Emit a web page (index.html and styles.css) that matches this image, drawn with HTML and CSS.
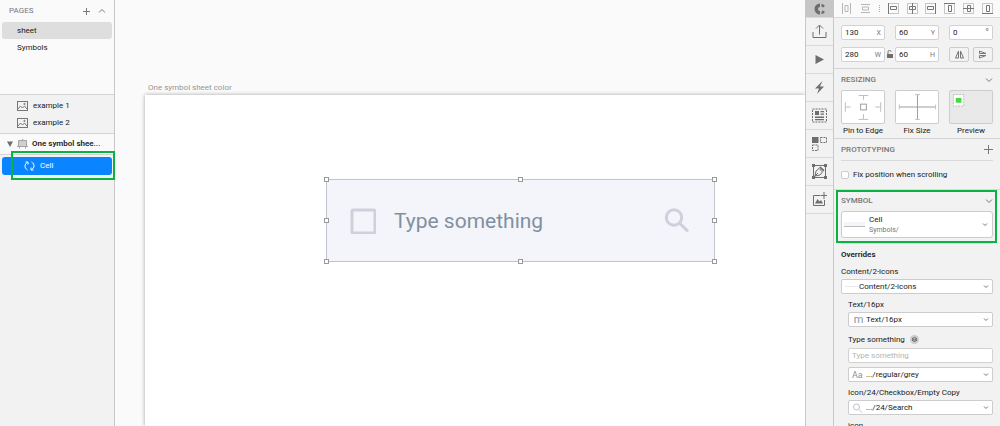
FILE: index.html
```html
<!DOCTYPE html>
<html lang="en">
<head>
    <meta charset="UTF-8">
    <meta name="viewport" content="width=device-width, initial-scale=1.0">
    <title>One symbol sheet color</title>
    <link rel="stylesheet" href="styles.css">
</head>
<body>
    <aside class="sidebar">
        <section class="pages">
            <header class="pages-header">
                <h2>PAGES</h2>
                <button class="icon-btn" aria-label="Add page"><svg width="9" height="9" viewBox="0 0 9 9"><path d="M4.500 1v7M1 4.500h7"/></svg></button>
                <button class="icon-btn" aria-label="Collapse pages"><svg width="8" height="8" viewBox="0 0 8 8"><path d="M1 5.500l3-3 3 3"/></svg></button>
            </header>
            <button class="page active-page">sheet</button>
            <button class="page">Symbols</button>
        </section>
        <section class="artboards">
            <button class="layer">
                <svg width="11" height="10" viewBox="0 0 11 10"><rect x=".5" y=".5" width="10" height="9"/><path d="M1 8l2.500-3 2 2 2-2L10 8"/><circle cx="7.500" cy="3" r=".7"/></svg>
                example 1
            </button>
            <button class="layer">
                <svg width="11" height="10" viewBox="0 0 11 10"><rect x=".5" y=".5" width="10" height="9"/><path d="M1 8l2.500-3 2 2 2-2L10 8"/><circle cx="7.500" cy="3" r=".7"/></svg>
                example 2
            </button>
        </section>
        <button class="open-artboard">
            <svg width="6" height="6" viewBox="0 0 6 6"><path class="solid" d="M0 .5h6L3 6z"/></svg>
            <svg class="board" width="11" height="10" viewBox="0 0 11 10"><path d="M1.500 1.500h8v6h-8z" fill="#d0d0d0"/><path d="M0 7.500h11M5.500 0v1M2.500 8v1.500M8.500 8v1.500"/></svg>
            <span>One symbol shee...</span>
        </button>
        <div class="cell-layer">
            <button class="cell-btn">
                <svg width="11" height="10" viewBox="0 0 11 10"><path d="M3.500 9C0 7 .3 3 3.500 1.500M1.500 1h2.500v2.500M7.500 1C11 3 10.700 7 7.500 8.500M9.500 9H7V6.500"/></svg>
                Cell
            </button>
            <div class="marker layer-marker"></div>
        </div>
    </aside>

    <main class="canvas">
        <div class="artboard-name">One symbol sheet color</div>
        <div class="artboard">
            <div class="symbol">
                <svg class="shape" width="26" height="26" viewBox="0 0 26 26"><rect x="2" y="2" width="23" height="23" rx="1.500"/></svg>
                <span class="symbol-text">Type something</span>
                <svg class="shape" width="26" height="26" viewBox="0 0 26 26"><circle cx="10" cy="9.500" r="7.700"/><path d="M15.500 15l8.500 8.500"/></svg>
                <i class="handle top left"></i>
                <i class="handle top middle"></i>
                <i class="handle top right"></i>
                <i class="handle center left"></i>
                <i class="handle center right"></i>
                <i class="handle bottom left"></i>
                <i class="handle bottom middle"></i>
                <i class="handle bottom right"></i>
            </div>
        </div>
    </main>

    <nav class="tools">
        <button class="tool active-tool" aria-label="Craft"><svg width="12" height="12" viewBox="0 0 12 12"><path class="solid" d="M6 .5a5.500 5.500 0 0 0 0 11V8a2 2 0 0 1 0-4zM7.500 .8Q9.500 1 11 3L9 4.500 7.500 3.500zM7.500 11.200Q9.500 11 11 9L9 7.500 7.500 8.500z"/></svg></button>
        <button class="tool" aria-label="Upload"><svg width="15" height="15" viewBox="0 0 15 15"><path d="M1 8v5.500h13V8M7.500 10.500V1.500M4 4.500l3.500-3.500L11 4.500"/></svg></button>
        <button class="tool" aria-label="Prototype"><svg width="15" height="15" viewBox="0 0 15 15"><path class="solid" d="M3.500 3l8.500 4.500L3.500 12z"/></svg></button>
        <button class="tool" aria-label="Sync"><svg width="15" height="15" viewBox="0 0 15 15"><path class="solid" d="M10.500 1L3 8.500h4L5 14l7-7.500H8z"/></svg></button>
        <button class="tool" aria-label="Data"><svg width="15" height="15" viewBox="0 0 15 15"><rect class="dashed" x=".5" y="1" width="14" height="13"/><path class="solid" d="M3 3h4v4H3zM8.500 3H12v1.300H8.500zM8.500 5.500H12v1.300H8.500zM3 8.500h9V10H3zM3 11h9v1.300H3z"/></svg></button>
        <button class="tool" aria-label="Duplicate"><svg width="15" height="15" viewBox="0 0 15 15"><path class="solid" d="M0 1h6.500v6H0z"/><path class="dashed" d="M8.500 1.500h6v5h-6zM.5 9H6v5.500H.5z"/></svg></button>
        <button class="tool" aria-label="Freehand"><svg width="15" height="15" viewBox="0 0 15 15"><path d="M1.500 1.500h12v12h-12z"/><path class="solid" d="M0 0h3v3H0zM12 0h3v3h-3zM0 12h3v3H0zM12 12h3v3h-3zM7 3.500l1.500-1L12.500 6l-1 1.500z"/><path d="M3 12l1-5 3-2.500L10.500 8 8 11zM3 12l3-3"/></svg></button>
        <button class="tool" aria-label="Stock"><svg width="15" height="15" viewBox="0 0 15 15"><path d="M8 3.500H1.500v10h11V8M12 0v7M8.500 3.500H15"/><path class="solid" d="M3 11.500L5.500 7l2 2.500L9 8l2 3.500z"/></svg></button>
    </nav>

    <aside class="inspector">
        <div class="align">
            <button class="faded" aria-label="Distribute horizontally"><svg width="11" height="11" viewBox="0 0 11 11"><path d="M1.500 0v11M9.500 0v11M4 2.500h3v6H4z"/></svg></button>
            <button class="faded" aria-label="Distribute vertically"><svg width="11" height="11" viewBox="0 0 11 11"><path d="M1 1.500h9M1 9.500h9M2.500 4h6v3h-6z"/></svg></button>
            <span class="dots"></span>
            <button aria-label="Align left"><svg width="11" height="11" viewBox="0 0 11 11"><path d="M.5 0v11M2.500 3.500h6v3h-6z"/><path class="thin" d="M1 .5h9.500v10H1"/></svg></button>
            <button aria-label="Align center"><svg width="11" height="11" viewBox="0 0 11 11"><path d="M5.500 0v11M2.500 3.500h6v3h-6z"/><path class="thin" d="M.5 .5h10v10H.5z"/></svg></button>
            <button aria-label="Align right"><svg width="11" height="11" viewBox="0 0 11 11"><path d="M10.500 0v11M2.500 3.500h6v3h-6z"/><path class="thin" d="M10 .5H.5v10H10"/></svg></button>
            <button aria-label="Align top"><svg width="11" height="11" viewBox="0 0 11 11"><path d="M0 .5h11M4.500 2.500h3v6h-3z"/><path class="thin" d="M.5 1v9.500h10V1"/></svg></button>
            <button aria-label="Align middle"><svg width="11" height="11" viewBox="0 0 11 11"><path d="M0 5.500h11M4.500 2.500h3v6h-3z"/><path class="thin" d="M.5 .5h10v10H.5z"/></svg></button>
            <button aria-label="Align bottom"><svg width="11" height="11" viewBox="0 0 11 11"><path d="M0 10.500h11M4.500 2.500h3v6h-3z"/><path class="thin" d="M.5 10V.5h10V10"/></svg></button>
        </div>

        <div class="geometry">
            <label class="field"><input type="text" value="130"><span>X</span></label>
            <label class="field"><input type="text" value="60"><span>Y</span></label>
            <label class="field"><input type="text" value="0"><span class="degree">°</span></label>
            <label class="field"><input type="text" value="280"><span>W</span></label>
            <label class="field"><input type="text" value="60"><span>H</span></label>
            <div class="flips">
                <button aria-label="Flip horizontal"><svg width="11" height="9" viewBox="0 0 11 9"><path d="M4.500 1v7H1.500zM6.500 1v7h3z"/></svg></button>
                <button aria-label="Flip vertical"><svg width="11" height="9" viewBox="0 0 11 9"><path d="M1.500 3.500V1L8 3.500zM1.500 5.500V8L8 5.500z"/></svg></button>
            </div>
            <button class="lock" aria-label="Lock proportions"><svg width="6" height="8" viewBox="0 0 6 8"><path class="solid" d="M0 4h6v4H0z"/><path d="M1 4V2a1.500 1.500 0 0 1 3-.3"/></svg></button>
        </div>

        <section class="resizing">
            <header class="panel-header">
                <h2>RESIZING</h2>
                <button class="icon-btn" aria-label="Collapse resizing"><svg width="8" height="8" viewBox="0 0 8 8"><path d="M1 2.500l3 3 3-3"/></svg></button>
            </header>
            <div class="resize-grid">
                <figure>
                    <svg viewBox="0 0 44 33"><path d="M22.500 4v5M17.500 4.500h10M22.500 24v5M17.500 29.500h10M4 16.500h5M3.500 11.500v10M35 16.500h5M40.500 11.500v10"/><rect class="dark" x="19.500" y="13.500" width="6" height="6"/></svg>
                    <figcaption>Pin to Edge</figcaption>
                </figure>
                <figure>
                    <svg viewBox="0 0 44 33"><path class="dark" d="M4 16.500h37M22.500 4v25"/><path d="M3.500 14v5M41.500 14v5M20 3.500h5M20 29.500h5"/></svg>
                    <figcaption>Fix Size</figcaption>
                </figure>
                <figure class="preview">
                    <svg viewBox="0 0 44 33"><rect x="3.500" y="3.500" width="11" height="12" fill="#fff" stroke-dasharray="2 1"/><rect x="6" y="7" width="6" height="5" fill="#46db3b" stroke="none"/></svg>
                    <figcaption>Preview</figcaption>
                </figure>
            </div>
        </section>

        <section class="prototyping">
            <header class="panel-header">
                <h2>PROTOTYPING</h2>
                <button class="icon-btn" aria-label="Add link"><svg width="9" height="9" viewBox="0 0 9 9"><path d="M4.500 0v9M0 4.500h9"/></svg></button>
            </header>
            <label class="check"><input type="checkbox"> Fix position when scrolling</label>
        </section>

        <section class="symbol-panel">
            <header class="panel-header">
                <h2>SYMBOL</h2>
                <button class="icon-btn" aria-label="Collapse symbol"><svg width="8" height="8" viewBox="0 0 8 8"><path d="M1 2.500l3 3 3-3"/></svg></button>
            </header>
            <button class="symbol-picker" aria-haspopup="listbox">
                <span class="thumb"></span>
                <span class="picker-name">Cell<small>Symbols/</small></span>
                <svg class="arrow" width="6" height="5" viewBox="0 0 6 5"><path d="M1 1.500l2 2 2-2"/></svg>
            </button>
            <div class="marker"></div>
        </section>

        <section class="overrides">
            <h3>Overrides</h3>
            <label for="content">Content/2-icons</label>
            <div class="select">
                <span class="select-icon rule"></span>
                <select id="content"><option>Content/2-icons</option></select>
                <svg class="arrow" width="6" height="5" viewBox="0 0 6 5"><path d="M1 1.500l2 2 2-2"/></svg>
            </div>
            <div class="nested">
                <label for="text">Text/16px</label>
                <div class="select">
                    <span class="select-icon letter-m">m</span>
                    <select id="text"><option>Text/16px</option></select>
                    <svg class="arrow" width="6" height="5" viewBox="0 0 6 5"><path d="M1 1.500l2 2 2-2"/></svg>
                </div>
                <label class="value-label" for="value">Type something <svg class="badge" width="9" height="9" viewBox="0 0 9 9"><circle cx="4.500" cy="4.500" r="4.500"/><path d="M2 3.800l2.500-1.300L7 3.800 4.500 5.100zM2 5.200l2.500 1.300L7 5.200"/></svg></label>
                <input class="text-value" id="value" type="text" placeholder="Type something">
                <div class="select">
                    <span class="select-icon letter-a">Aa</span>
                    <select aria-label="Text style"><option>.../regular/grey</option></select>
                    <svg class="arrow" width="6" height="5" viewBox="0 0 6 5"><path d="M1 1.500l2 2 2-2"/></svg>
                </div>
                <label for="icon">Icon/24/Checkbox/Empty Copy</label>
                <div class="select">
                    <svg class="select-icon" width="12" height="10" viewBox="0 0 12 10"><circle cx="4" cy="4" r="3"/><path d="M6.200 6.200L9.500 9.500"/></svg>
                    <select id="icon"><option>.../24/Search</option></select>
                    <svg class="arrow" width="6" height="5" viewBox="0 0 6 5"><path d="M1 1.500l2 2 2-2"/></svg>
                </div>
                <label>icon</label>
            </div>
        </section>
    </aside>
</body>
</html>
```

FILE: styles.css
```css
* {
    box-sizing: border-box;
}
body {
    margin: 0;
    display: flex;
    height: 100vh;
    overflow: hidden;
    font-family: Roboto, "Liberation Sans", sans-serif;
    font-size: 8px;
    line-height: 10px;
    color: #1a1a1a;
    background: #fafafa;
}
button, input, select {
    font: inherit;
    color: inherit;
    margin: 0;
    padding: 0;
    border: 0;
    background: none;
}
h2, h3, figure {
    margin: 0;
    font-size: 8px;
}
h2 {
    flex: 1;
    font-weight: 500;
    color: #777;
}
svg {
    display: block;
    flex: none;
    fill: none;
    stroke: #777;
}
.solid {
    fill: #6e6e6e;
    stroke: none;
}
.icon-btn {
    display: flex;
}
.marker {
    position: absolute;
    inset: 0 3px 0 2px;
    border: 2px solid #08b344;
    pointer-events: none;
}

/* left sidebar */
.sidebar {
    flex: none;
    width: 115px;
    border-right: 1px solid #c8c8c8;
    background: #f2f2f2;
}
.pages {
    height: 94px;
    padding: 0 2px;
    background: #fafafa;
}
.pages-header {
    display: flex;
    align-items: center;
    gap: 7px;
    height: 22px;
    padding: 0 6px 0 7px;
}
.pages-header h2 {
    font-weight: 400;
}
.page {
    display: block;
    width: 100%;
    height: 17px;
    padding: 1px 15px 0;
    border-radius: 3px;
    text-align: left;
}
.active-page {
    background: #dedede;
}
.artboards {
    padding: 2px 0;
    border-top: 1px solid #d4d4d4;
}
.layer {
    display: flex;
    align-items: center;
    gap: 5px;
    width: 100%;
    height: 17px;
    padding: 0 17px;
}
.open-artboard {
    display: flex;
    align-items: center;
    gap: 4px;
    width: 100%;
    height: 22px;
    padding: 0 0 0 7px;
    border: solid #d4d4d4;
    border-width: 1px 0;
    font-weight: 600;
    background: #fafafa;
    white-space: nowrap;
}
.board {
    stroke: #a4a4a4;
}
.cell-layer {
    position: relative;
    padding: 2px;
}
.cell-btn {
    display: flex;
    align-items: center;
    gap: 5px;
    width: 100%;
    height: 18px;
    padding: 0 22px;
    border-radius: 3px;
    color: #fff;
    background: #0a84ff;
}
.cell-btn svg {
    stroke: #fff;
}
.layer-marker {
    inset: -4px -1px -3px 11px;
}

/* canvas */
.canvas {
    flex: 1;
    min-width: 0;
    display: flex;
    flex-direction: column;
    padding: 83px 0 0 30px;
}
.artboard-name {
    height: 12px;
    padding-left: 3px;
    color: #949494;
}
.artboard {
    flex: 1;
    padding: 84px 90px 0 181px;
    background: #fff;
    box-shadow: 0 0 4px rgba(0, 0, 0, 0.35);
    clip-path: inset(-4px 0 0 -4px);
}
.symbol {
    position: relative;
    display: flex;
    align-items: center;
    gap: 18px;
    height: 83px;
    padding: 0 24px 0 23px;
    border: 1px solid #c3c3d0;
    background: #f4f5fa;
}
.symbol-text {
    flex: 1;
    font-size: 21px;
    line-height: 26px;
    color: #8190a0;
}
.shape {
    stroke: #d0d0dc;
    stroke-width: 3;
}
.handle {
    position: absolute;
    width: 5px;
    height: 5px;
    margin: -3px;
    border: 1px solid #999;
    background: #fff;
}
.top { top: 0; }
.center { top: 50%; }
.bottom { bottom: 0; }
.left { left: 0; }
.middle { left: 50%; }
.right { right: 0; }

/* plugin toolbar */
.tools {
    flex: none;
    width: 29px;
    border: solid #c8c8c8;
    border-width: 0 1px;
    background: #f2f2f2;
}
.tool {
    display: flex;
    align-items: center;
    justify-content: center;
    width: 100%;
    height: 28px;
    border-bottom: 1px solid #dadada;
}
.tool svg {
    stroke: #6e6e6e;
}
.active-tool {
    height: 18px;
    background: #c6c6c6;
}
.tool .dashed {
    stroke-dasharray: 2 1;
}

/* inspector */
.inspector {
    flex: none;
    width: 166px;
    background: #f2f2f2;
}
.align {
    display: flex;
    align-items: center;
    justify-content: space-between;
    height: 18px;
    padding: 0 7px;
    border-bottom: 1px solid #dadada;
    background: #fafafa;
}
.align .faded {
    opacity: 0.5;
}
.align .thin {
    opacity: 0.4;
}
.dots {
    height: 7px;
    border-left: 1px dotted #aaa;
}
.geometry {
    position: relative;
    display: grid;
    grid-template-columns: repeat(3, minmax(0, 1fr));
    gap: 7px 10px;
    padding: 7px 7px 6px;
    border-bottom: 1px solid #d4d4d4;
}
.field {
    display: flex;
    align-items: center;
    height: 15px;
    padding: 0 3px;
    border: 1px solid #d2d2d2;
    border-radius: 2px;
    background: #fff;
}
.field input {
    flex: 1;
    min-width: 0;
}
.field span {
    font-size: 7px;
    color: #777;
}
.field .degree {
    font-size: 10px;
}
.flips {
    display: flex;
    gap: 4px;
}
.flips button {
    flex: 1;
    display: flex;
    align-items: center;
    justify-content: center;
    border: 1px solid #ccc;
    border-radius: 2px;
}
.lock {
    position: absolute;
    left: 53px;
    bottom: 10px;
}
.panel-header {
    display: flex;
    align-items: center;
    height: 21px;
}
.resizing {
    padding: 0 7px 2px;
    border-bottom: 1px solid #d4d4d4;
}
.resize-grid {
    display: grid;
    grid-template-columns: repeat(3, minmax(0, 1fr));
    gap: 10px;
}
.resize-grid figure {
    text-align: center;
    white-space: nowrap;
}
.resize-grid svg {
    width: 100%;
    height: 34px;
    border: 1px solid #ccc;
    border-radius: 2px;
    background: #fff;
    stroke: #bbb;
}
.resize-grid .dark {
    stroke: #999;
}
.resize-grid .preview svg {
    background: #e9e9e9;
}
.resize-grid figcaption {
    padding-top: 2px;
}
.prototyping {
    padding: 0 7px;
}
.check {
    display: flex;
    align-items: center;
    gap: 4px;
    height: 29px;
    border-top: 1px solid #dadada;
}
.check input {
    appearance: none;
    width: 8px;
    height: 8px;
    border: 1px solid #ccc;
    border-radius: 2px;
    background: #fff;
}
.symbol-panel {
    position: relative;
    padding: 0 7px 5px;
    border-top: 1px solid #dadada;
}
.symbol-picker {
    display: flex;
    align-items: center;
    width: 100%;
    height: 27px;
    padding: 0 4px 0 2px;
    border: 1px solid #ccc;
    border-radius: 3px;
    background: #fff;
    text-align: left;
}
.thumb {
    width: 21px;
    height: 5px;
    margin-right: 4px;
    border-bottom: 1px solid #bbb;
    background: #f4f5fa;
}
.picker-name {
    flex: 1;
}
.picker-name small {
    display: block;
    font-size: 7px;
    color: #777;
}
.overrides {
    margin: 0 7px;
    padding-top: 4px;
    border-top: 1px solid #dadada;
}
.overrides h3 {
    height: 16px;
    line-height: 14px;
    font-weight: 600;
}
.overrides label {
    display: flex;
    align-items: center;
    gap: 5px;
    height: 15px;
}
.nested {
    padding-left: 7px;
}
.nested label {
    height: 18px;
    padding-top: 4px;
}
.nested .value-label {
    height: 21px;
}
.select {
    display: flex;
    align-items: center;
    height: 15px;
    padding: 0 3px;
    border: 1px solid #ccc;
    border-radius: 2px;
    background: #fff;
}
.select select {
    flex: 1;
    min-width: 0;
    appearance: none;
}
.select-icon {
    width: 13px;
    color: #8993a3;
    stroke: #bcc2ce;
}
.letter-m {
    font-size: 11px;
    text-align: center;
}
.letter-a {
    font-size: 9px;
}
.rule {
    height: 1px;
    background: #e8e8ee;
}
.nested select, .rule + select {
    padding-left: 1px;
}
.badge {
    stroke: #666;
}
.badge circle {
    fill: #ccc;
    stroke: none;
}
.text-value {
    display: block;
    width: 100%;
    height: 15px;
    margin-bottom: 4px;
    padding: 0 3px;
    border: 1px solid #d2d2d2;
    border-radius: 2px;
    background: #fff;
}
.text-value::placeholder {
    color: #b4b4b4;
}
```
